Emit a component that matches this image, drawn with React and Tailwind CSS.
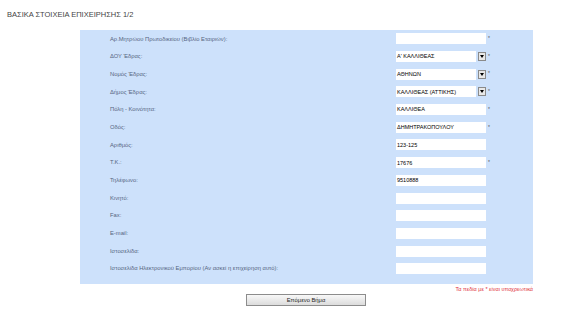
import React from 'react';

const rows = [
  { label: 'Αρ.Μητρώου Πρωτοδικείου (Βιβλίο Εταιριών):', value: '', req: true },
  { label: 'ΔΟΥ Έδρας:', value: 'Α\' ΚΑΛΛΙΘΕΑΣ', select: true, req: true },
  { label: 'Νομός Έδρας:', value: 'ΑΘΗΝΩΝ', select: true, req: true },
  { label: 'Δήμος Έδρας:', value: 'ΚΑΛΛΙΘΕΑΣ (ΑΤΤΙΚΗΣ)', select: true, req: true },
  { label: 'Πόλη - Κοινότητα:', value: 'ΚΑΛΛΙΘΕΑ', req: true },
  { label: 'Οδός:', value: 'ΔΗΜΗΤΡΑΚΟΠΟΥΛΟΥ', req: true },
  { label: 'Αριθμός:', value: '123-125' },
  { label: 'Τ.Κ.:', value: '17676', req: true },
  { label: 'Τηλέφωνο:', value: '9510888' },
  { label: 'Κινητό:', value: '' },
  { label: 'Fax:', value: '' },
  { label: 'E-mail:', value: '' },
  { label: 'Ιστοσελίδα:', value: '' },
  { label: 'Ιστοσελίδα Ηλεκτρονικού Εμπορίου (Αν ασκεί η επιχείρηση αυτό):', value: '' },
];

function Field({ row }) {
  if (row.select) {
    return (
      <div className="flex items-center gap-[2px]">
        <div className="w-[80px] h-[11px] bg-white flex items-center px-[1px] text-[5.5px] text-black">{row.value}</div>
        <div className="w-[8px] h-[9px] border border-[#8a8a8a] bg-[#e8e8e8] flex items-center justify-center">
          <svg width="4" height="3" viewBox="0 0 4 3"><path d="M0 0h4L2 3z" fill="#000" /></svg>
        </div>
      </div>
    );
  }
  return (
    <div className="w-[90px] h-[11px] bg-white flex items-center px-[1px] text-[5.5px] text-black">{row.value}</div>
  );
}

export default function App() {
  return (
    <div className="w-[577px] h-[309px] bg-white" style={{ fontFamily: '"Liberation Sans", Arial, sans-serif' }}>
      <div className="pt-[11px] pl-[7px] text-[7.5px] text-[#444] leading-none h-[30px]">ΒΑΣΙΚΑ ΣΤΟΙΧΕΙΑ ΕΠΙΧΕΙΡΗΣΗΣ 1/2</div>
      <div className="ml-[80px] w-[453px] h-[254px] bg-[#cde1fb] pl-[30px]">
        {rows.map((row, i) => (
          <div key={i} className="flex items-center h-[17.7px]">
            <div className="w-[286px] text-[5.8px] text-[#56657f] whitespace-nowrap">{row.label}</div>
            <Field row={row} />
            {row.req && <span className="ml-[2px] text-[5px] text-[#555]">*</span>}
          </div>
        ))}
      </div>
      <div className="w-[533px] text-right text-[5.5px] text-[#e0303a] mt-[1px]">Τα πεδία με * είναι υποχρεωτικά</div>
      <div className="flex mt-[1px] pl-[246px]">
        <button className="w-[120px] h-[12px] border border-[#8c8c8c] bg-gradient-to-b from-[#f8f8f8] to-[#dcdcdc] text-[5.8px] text-[#222] flex items-center justify-center">Επόμενο Βήμα</button>
      </div>
    </div>
  );
}
